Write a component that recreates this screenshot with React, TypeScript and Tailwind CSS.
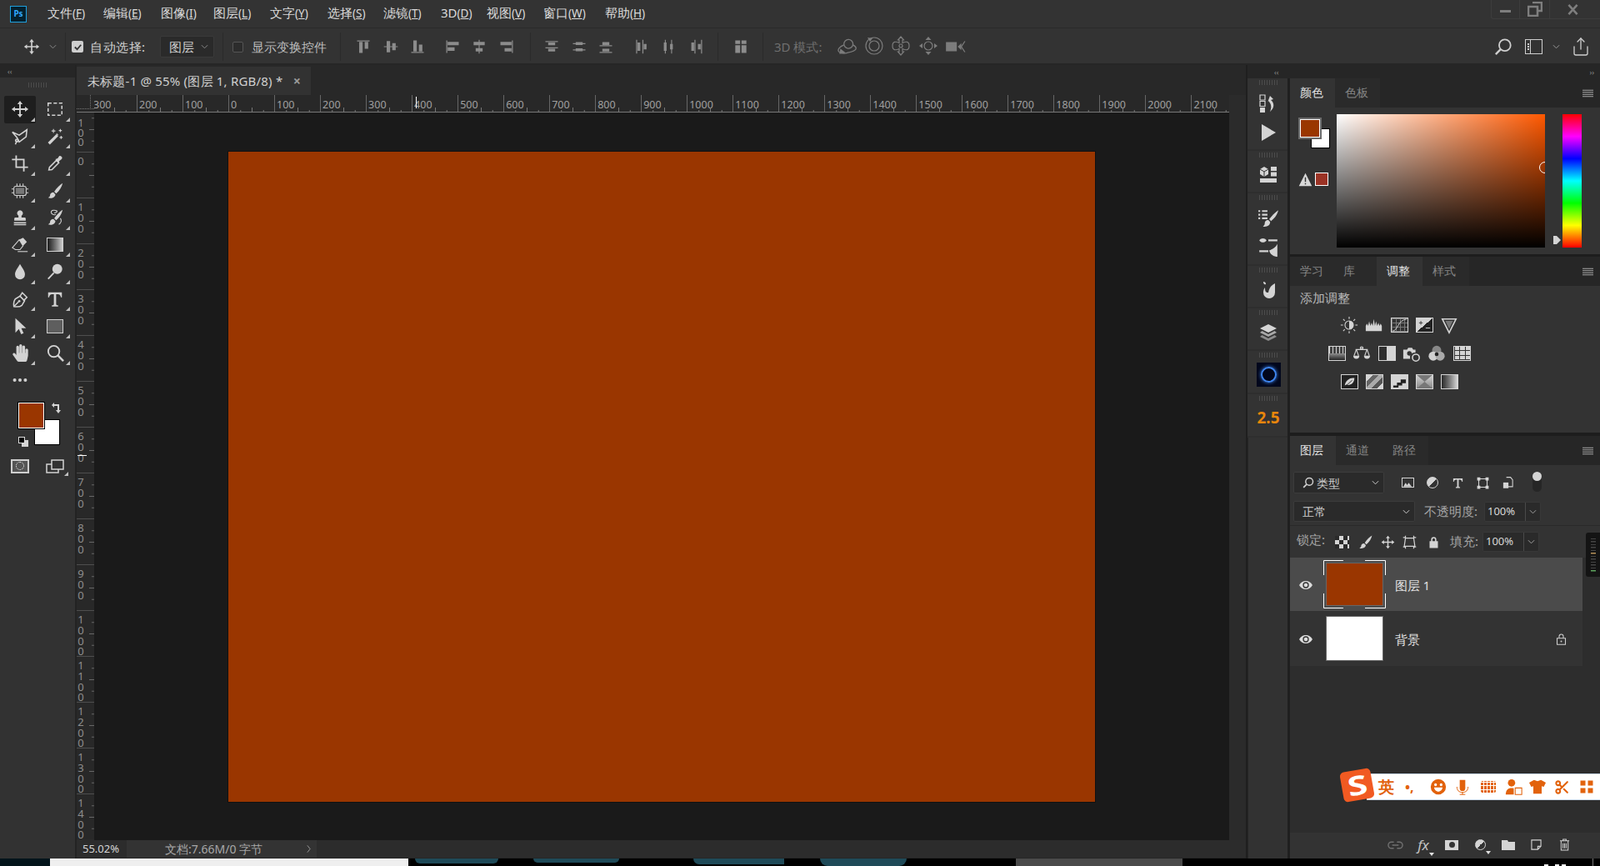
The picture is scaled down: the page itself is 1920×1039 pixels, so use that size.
import * as React from 'react';
import { FaHandPaper } from 'react-icons/fa';
import { Scissors, Share } from 'lucide-react';

type IconProps = { className?: string; children?: React.ReactNode; box?: string };

// all the little photoshop glyphs sit in a 24 box and inherit currentColor
const Ic: React.FC<IconProps> = ({ className = 'w-[22px] h-[22px]', children, box = '0 0 24 24' }) => (
  <svg viewBox={box} className={className} fill="currentColor" stroke="none">
    {children}
  </svg>
);

const line = { fill: 'none', stroke: 'currentColor', strokeWidth: 1.7 };
const thin = { fill: 'none', stroke: 'currentColor', strokeWidth: 1.2 };

const MOVE = 'M12 1l3.4 4.4H13V11h5.6V8.6L23 12l-4.4 3.4V13H13v5.6h2.4L12 23l-3.4-4.4H11V13H5.4v2.4L1 12l4.4-3.4V11H11V5.4H8.6z';
const BRUSH = 'M22 2c-3.5 2-8 6.500-11 11l2.500 2.500C18 12 21 6.500 22 2zM10 14c-3 0-4.500 2-4.500 4 0 1.200-1 2-2.500 3 5 1.500 9.500-1 9.500-4.500z';
const DROP = 'M12 2c3 5.500 6.500 9 6.500 13.500a6.500 6.500 0 0 1-13 0C5.500 11 9 7.500 12 2z';

const tools: React.ReactNode[] = [
  <Ic><path d={MOVE} /></Ic>,
  <Ic><rect x="3" y="4" width="18" height="16" strokeDasharray="4.500 2.600" {...line} /></Ic>,
  <Ic>
    <path d="M2 6l9 4 10-7-1 9-9 7-3-6z" {...line} />
    <path d="M8 17l-2 5" {...line} />
    <circle cx="8" cy="17" r="1.800" {...line} />
  </Ic>,
  <Ic>
    <path d="M4 21L15 10" stroke="currentColor" strokeWidth="3.600" fill="none" />
    <path d="M10 2v5M7.500 4.500h5M19 2v4M17 4h4M20 11v4M18 13h4M14 8l2 2" {...thin} />
  </Ic>,
  <Ic><path d="M7 1.500V17h15.500M1.500 7H17v15.500" {...line} strokeWidth="2" /></Ic>,
  <Ic>
    <path d="M4 20.500l.8-3.500 9-9 3.200 3.200-9 9z" {...line} />
    <path d="M12.500 6.500l3-1 2-3c1.500-1 3.500.5 3.800 1.800s-.6 2.400-1.800 3l-2 1.700-1 3z" />
  </Ic>,
  <Ic>
    <rect x="4" y="6" width="16" height="12" rx="2.500" {...thin} />
    <rect x="6.500" y="8" width="11" height="8" fill="#777" />
    <path d="M8 2.500v3M12 2.500v3M16 2.500v3M8 18.500v3M12 18.500v3M16 18.500v3M1 9.500h3M1 14.500h3M20 9.500h3M20 14.500h3" {...thin} />
  </Ic>,
  <Ic><path d={BRUSH} /></Ic>,
  <Ic>
    <path d="M12 2.500a3.800 3.800 0 0 0-2 7V12H6a1.500 1.500 0 0 0-1.500 1.500V16h15v-2.500A1.500 1.500 0 0 0 18 12h-4V9.500a3.800 3.800 0 0 0-2-7z" />
    <path d="M4 18h16v1.500H4zM4 20.500h16V22H4z" />
  </Ic>,
  <Ic>
    <path d={BRUSH} />
    <path d="M13 8c-2 1-6 0-6-3s5-3 7-2-1 3-3 3M19 13c2 3 1 6-2 8" {...thin} />
  </Ic>,
  <Ic>
    <path d="M11 5l5-2.500 5 5.500-5 5z" />
    <path d="M11 5l5 8-4 5H6l-4-2.500z" {...thin} />
    <path d="M9 20.500h13" {...thin} />
  </Ic>,
  <div className="w-[20px] h-[17px] border border-[#d0d0d0] bg-gradient-to-r from-[#1d1d1d] to-[#cfcfcf]" />,
  <Ic><path d={DROP} /></Ic>,
  <Ic>
    <circle cx="15" cy="8.500" r="6.500" />
    <path d="M10.500 13.500L3 21.500" stroke="currentColor" strokeWidth="2" />
  </Ic>,
  <Ic>
    <path d="M4 21.500c-.6-4 .4-8 2-10l6-3.500 6 6-3.500 6c-2 1.600-6.500 2.100-10.500 1.500z" {...line} />
    <path d="M12 8l3-4.500 6 6L16.500 14M4.500 21L10 15.500" {...line} />
    <circle cx="11" cy="14.500" r="1.500" />
  </Ic>,
  <Ic>
    <path d="M3 3h18v6.500h-1.300c-.4-2.300-1.400-4-4.200-4H13.500V18.500c0 1 .9 1.400 2.600 1.500v1.500H7.900V20c1.700-.1 2.600-.5 2.600-1.500V5.500H8.500c-2.800 0-3.800 1.700-4.200 4H3z" />
  </Ic>,
  <Ic><path d="M6 2v19l4.500-4.800 3 6.800 3.200-1.400-3-6.600H20z" /></Ic>,
  <div className="w-[20px] h-[17px] border border-[#d0d0d0] bg-[#5e5e5e]" />,
  <FaHandPaper className="w-[19px] h-[21px]" />,
  <Ic className="w-[23px] h-[23px]">
    <circle cx="10" cy="10" r="7" {...line} strokeWidth="2" />
    <path d="M15 15l7 7" stroke="currentColor" strokeWidth="2.600" />
  </Ic>,
  <Ic>
    <circle cx="5" cy="12" r="2.200" />
    <circle cx="12" cy="12" r="2.200" />
    <circle cx="19" cy="12" r="2.200" />
  </Ic>,
];

const menus = [
  ['文件', 'F', 'w-[67px]'],
  ['编辑', 'E', 'w-[69px]'],
  ['图像', 'I', 'w-[63px]'],
  ['图层', 'L', 'w-[68px]'],
  ['文字', 'Y', 'w-[69px]'],
  ['选择', 'S', 'w-[67px]'],
  ['滤镜', 'T', 'w-[69px]'],
  ['3D', 'D', 'w-[55px]'],
  ['视图', 'V', 'w-[68px]'],
  ['窗口', 'W', 'w-[74px]'],
  ['帮助', 'H', 'w-[60px]'],
];

const Sep = ({ className = '' }: { className?: string }) => <div className={`w-px h-[34px] bg-[#2a2a2a] ${className}`} />;

const Chevron = ({ className = 'text-[#a0a0a0]' }: { className?: string }) => (
  <svg viewBox="0 0 10 6" className={`w-[9px] h-[6px] ${className}`}>
    <path d="M1 1l4 4 4-4" fill="none" stroke="currentColor" strokeWidth="1.100" />
  </svg>
);

const Align = ({ children }: { children: React.ReactNode }) => (
  <div className="w-[32.500px] flex justify-center">
    <Ic className="w-[20px] h-[20px]">{children}</Ic>
  </div>
);

const aligns = [
  ['M3 3h18v1.500H3zM6 5h5v16H6zM14 5h5v10h-5z'],
  ['M2 11.300h20v1.400H2zM6 4h5v16H6zM14 7h5v10h-5z'],
  ['M3 19.500h18V21H3zM6 3h5v16H6zM14 9h5v10h-5z'],
  ['M3 3h1.500v18H3zM5 5h16v5H5zM5 13h10v5H5z'],
  ['M11.300 2h1.400v20h-1.400zM4 5h16v5H4zM7 14h10v5H7z'],
  ['M19.500 3H21v18h-1.500zM3 5h16v5H3zM9 14h10v5H9z'],
];
const aligns2 = [
  ['M3 4h18v1.500H3zM7 6h10v4H7zM3 13h18v1.500H3zM7 15h10v4H7z'],
  ['M3 7h4v1.400H3zM17 7h4v1.400h-4zM7 5.500h10v4H7zM3 16h4v1.400H3zM17 16h4v1.400h-4zM7 14.500h10v4H7z'],
  ['M3 10h18v1.500H3zM7 5.500h10v4H7zM3 19.500h18V21H3zM7 15h10v4H7z'],
  ['M4 2h1.500v20H4zM6 6h4v12H6zM13 2h1.500v20H13zM15 8h4v8h-4z'],
  ['M7 2h1.400v20H7zM5.500 6h4v12h-4zM16 2h1.400v20H16zM14.500 8h4v8h-4z'],
  ['M10 2h1.500v20H10zM5.500 6h4v12h-4zM19.500 2H21v20h-1.500zM15 8h4v8h-4z'],
];

const threeD: React.ReactNode[] = [
  <Ic className="w-[26px] h-[26px]">
    <circle cx="14" cy="9" r="5" {...thin} />
    <path d="M9 10c-5 2-7 5-6 7s5 3 9 2 9-2 10-4-1-4-3-5" {...thin} />
    <path d="M5 14l6 5-7 1z" />
  </Ic>,
  <Ic className="w-[24px] h-[24px]">
    <circle cx="12" cy="12" r="10" {...thin} />
    <circle cx="12" cy="12" r="6" {...thin} />
    <path d="M4 2l6 1-3 4z" />
  </Ic>,
  <Ic className="w-[24px] h-[24px]">
    <path d="M12 1l3.500 4H14v3.500c4-2 8-2 8 3.500s-4 5.500-8 3.500V19h1.500L12 23l-3.500-4H10v-3.500c-4 2-8 2-8-3.500s4-5.500 8-3.500V5H8.500z" {...thin} />
    <circle cx="12" cy="12" r="2" {...thin} />
  </Ic>,
  <Ic className="w-[24px] h-[24px]">
    <path d="M12 1l3.500 4h-7zM12 23l3.500-4h-7zM1 12l4-3v6zM23 12l-4-3v6z" />
    <circle cx="12" cy="12" r="5" {...thin} />
  </Ic>,
  <Ic className="w-[26px] h-[26px]">
    <path d="M2 7h12v10H2zM15 12l4-4v8z" />
    <path d="M23 6l-4 6 4 6" {...thin} />
  </Ic>,
];

const RulerCell = ({ label }: { label: number }) => (
  <div className="relative w-[55.02px] h-full shrink-0 border-l border-[#666] pl-[2px] pt-[5px] text-[12.5px] leading-[14px] text-[#a0a0a0]">
    {label}
    <svg className="absolute bottom-0 left-0" width="55" height="6">
      <path d="M13.750 6V4M27.500 6V1M41.250 6V4" stroke="#777" fill="none" />
    </svg>
  </div>
);

// digits run down the cell, one upright label per tick
const VRulerCell = ({ label, first }: { label: number; first: boolean }) => (
  <div className={`relative h-[55.02px] w-full shrink-0 border-t border-[#4e4e4e] text-[13px] leading-[9px] text-[#8e8e8e] [writing-mode:vertical-lr] [text-orientation:upright] ${first ? 'pt-[10px] tracking-[-6.500px]' : 'pt-[1px] tracking-[-5.200px]'}`}>
    {label}
    <svg className="absolute top-0 right-0" width="6" height="55">
      <path d="M6 13.750H3M6 27.500H0M6 41.250H3" stroke="#666" fill="none" />
    </svg>
  </div>
);

const Hamburger = () => (
  <svg viewBox="0 0 14 10" className="w-[13px] h-[10px] text-[#a8a8a8]">
    <path d="M0 1h14M0 3.700h14M0 6.400h14M0 9h14" stroke="currentColor" strokeWidth="1.200" />
  </svg>
);

const Tabs = ({ items }: { items: [string, string, boolean][] }) => (
  <div className="flex items-stretch h-[35px] bg-[#262626] shrink-0 pr-[9px]">
    {items.map(([label, w, active]) => (
      <div
        key={label}
        className={`${w} flex items-center pl-[12px] pb-[2px] text-[14px] ${active ? 'bg-[#333333] text-[#e2e2e2]' : 'bg-[#2a2a2a] text-[#858585]'}`}
      >
        {label}
      </div>
    ))}
    <div className="flex-1 flex items-center justify-end">
      <Hamburger />
    </div>
  </div>
);

const Handle = () => <div className="h-[6px] w-[22px] mx-auto bg-[repeating-linear-gradient(90deg,#4c4c4c_0_1px,transparent_1px_3px)]" />;

const AdjCell = ({ children }: { children: React.ReactNode }) => <div className="w-[30px] flex justify-center">{children}</div>;

const adjBox = 'w-[21px] h-[18px] border border-[#d4d4d4]';

const adjRow1: React.ReactNode[] = [
  <Ic>
    <circle cx="12" cy="12" r="5.500" {...thin} />
    <path d="M12 6.500a5.500 5.500 0 0 1 0 11z" />
    <path d="M12 1v3M12 20v3M1 12h3M20 12h3M4.200 4.200l2.100 2.100M17.700 17.700l2.100 2.100M4.200 19.800l2.100-2.100M17.700 6.300l2.100-2.100" {...thin} />
  </Ic>,
  <Ic><path d="M1 20v-7l1.500-3 1.500 3 1.500-6 1.500 6 1.500-4 1.500 4 1.500-9 1.500 9 1.500-6 1.500 6 1.500-4 1.500 4 1.500-3 1.500 3V20z" /></Ic>,
  <div className={`${adjBox} border-[#7e7e7e] bg-[repeating-linear-gradient(90deg,#777_0_1px,transparent_1px_5px),repeating-linear-gradient(0deg,#777_0_1px,transparent_1px_5px)] relative`}>
    <svg viewBox="0 0 21 18" className="absolute inset-0 w-full h-full"><path d="M1 17C8 17 8 2 20 1" stroke="#ddd" fill="none" /></svg>
  </div>,
  <div className={`${adjBox} bg-[linear-gradient(to_bottom_right,#d4d4d4_50%,#222_50%)] relative`}>
    <svg viewBox="0 0 21 18" className="absolute inset-0 w-full h-full"><path d="M3 6h5M5.500 3.500v5M12 13h6" stroke="#333" /><path d="M12 13h6" stroke="#ddd" /></svg>
  </div>,
  <Ic>
    <path d="M3 4h18L12 22z" {...line} />
    <path d="M7 6.500h10L12 17z" fill="#777" />
  </Ic>,
];

const adjRow2: React.ReactNode[] = [
  <div className={`${adjBox} bg-[linear-gradient(to_bottom,transparent_45%,#999_45%,#222)] relative`}>
    <div className="h-[8px] bg-[repeating-linear-gradient(90deg,#d4d4d4_0_1px,#444_1px_4px)]" />
  </div>,
  <Ic>
    <path d="M12 4v2M4 7h16M5 7l-3 8M5 7l3 8M19 7l-3 8M19 7l3 8" {...thin} />
    <path d="M1 15h8a4 4 0 0 1-8 0zM15 15h8a4 4 0 0 1-8 0z" />
    <circle cx="12" cy="5" r="1.800" {...thin} />
  </Ic>,
  <div className={`${adjBox} flex`}>
    <div className="w-1/2 bg-[#2e2e2e]" />
    <div className="w-1/2 bg-[#d4d4d4]" />
  </div>,
  <Ic>
    <path d="M1 7h5l1.500-2.500h5L14 7h3v4a6 6 0 0 0-7 8H1z" />
    <circle cx="9" cy="12" r="3" fill="#333" />
    <circle cx="17.500" cy="17.500" r="4.500" {...line} />
  </Ic>,
  <Ic>
    <circle cx="12" cy="8" r="6" fill="#888" />
    <circle cx="7.500" cy="15.500" r="6" fill="#d0d0d0" />
    <circle cx="16.500" cy="15.500" r="6" fill="#aaa" />
    <circle cx="12" cy="13" r="2.500" fill="#222" />
  </Ic>,
  <div className={`${adjBox} bg-[repeating-linear-gradient(90deg,#333_0_1px,transparent_1px_6.300px),repeating-linear-gradient(0deg,#333_0_1px,transparent_1px_5.300px),linear-gradient(#d4d4d4,#d4d4d4)]`} />,
];

const adjRow3: React.ReactNode[] = [
  <div className={`${adjBox} bg-[#222] flex items-center justify-center`}>
    <svg viewBox="0 0 21 18" className="w-full h-full"><path d="M4 14C5 7 11 3 17 4c0 7-6 11-11 9z" fill="#d4d4d4" /><path d="M4 16L14 7" stroke="#222" /></svg>
  </div>,
  <div className={`${adjBox} bg-[linear-gradient(135deg,#d4d4d4_20%,#666_20%_40%,#aaa_40%_60%,#555_60%_80%,#d4d4d4_80%)]`} />,
  <div className={`${adjBox} bg-[#d4d4d4]`}>
    <svg viewBox="0 0 21 18" className="w-full h-full"><path d="M2 14h5v-4h5V6h7v5h-5v3H9v3H2z" fill="#222" /></svg>
  </div>,
  <div className={`${adjBox} bg-[linear-gradient(to_bottom,#d4d4d4,#888)] relative`}>
    <svg viewBox="0 0 21 18" className="w-full h-full"><path d="M0 0l10.500 9L21 0zM0 18l10.500-9L21 18z" fill="#777" /></svg>
  </div>,
  <div className={`${adjBox} bg-gradient-to-r from-[#2a2a2a] to-[#d8d8d8]`} />,
];

const Eye = () => (
  <Ic className="w-[16px] h-[16px] text-[#dcdcdc]">
    <path d="M0 12c3-5 7-7.500 12-7.500S21 7 24 12c-3 5-7 7.500-12 7.500S3 17 0 12z" />
    <circle cx="12" cy="12" r="5.500" fill="#333" />
    <circle cx="12" cy="12" r="3.500" />
  </Ic>
);

const ValueBox = () => (
  <div className="flex items-center h-[24px] w-[68px] rounded-[2px] bg-[#2a2a2a] border border-[#383838] text-[13px] text-[#d8d8d8]">
    <div className="w-[48px] pl-[3px]">100%</div>
    <div className="flex-1 h-full border-l border-[#4a4a4a] flex items-center justify-center">
      <Chevron />
    </div>
  </div>
);

const Caret = () => (
  <svg className="absolute bottom-[-5px] right-[4px]" width="6" height="4">
    <path d="M0 0h6L3 4z" fill="#e0e0e0" />
  </svg>
);

const orange = 'text-[#e2620c]';

export default function App() {
  return (
    <div className="relative w-[1920px] h-[1039px] overflow-hidden flex flex-col bg-black font-['Liberation_Sans','Noto_Sans_CJK_SC',sans-serif] text-[#d0d0d0]">
      {/* menu bar */}
      <div className="h-[34px] shrink-0 bg-[#333333] border-b border-[#2a2a2a] flex items-center pl-[12px] relative">
        <div className="w-[20px] h-[20px] border-[1.5px] border-[#1f9fdc] bg-[#04202e] flex items-center justify-center text-[10px] font-bold text-[#31a8ff]">
          Ps
        </div>
        <div className="flex ml-[25px] pb-[2px] text-[15px]">
          {menus.map(([name, key, w]) => (
            <div key={key} className={`${w} whitespace-nowrap text-[#dcdcdc]`}>
              {name}
              <span className="text-[13.500px]">
                (<span className="underline">{key}</span>)
              </span>
            </div>
          ))}
        </div>
        <div className="ml-auto flex h-[23px] self-start w-[131px] border-l border-b border-[#3d3d3d] rounded-bl-[3px] text-[#7e7e7e] pr-[5px]">
          <div className="w-[34px] border-r border-[#3d3d3d] flex items-center justify-center">
            <div className="w-[13px] h-[3px] bg-current mt-[4px]" />
          </div>
          <div className="w-[36px] border-r border-[#3d3d3d] flex items-center justify-center">
            <svg viewBox="0 0 18 18" className="w-[18px] h-[18px]"><path d="M6 1h11v10h-4M1 6h11v11H1z" fill="none" stroke="currentColor" strokeWidth="2.600" /></svg>
          </div>
          <div className="flex-1 flex items-center justify-center">
            <svg viewBox="0 0 14 14" className="w-[13px] h-[13px]"><path d="M1.500 1l11 12M12.500 1l-11 12" fill="none" stroke="currentColor" strokeWidth="2.800" /></svg>
          </div>
        </div>
      </div>

      {/* options bar */}
      <div className="h-[44px] shrink-0 bg-[#333333] border-b-2 border-[#262626] pt-[2px] flex items-center text-[15px]">
        <Ic className="w-[20px] h-[20px] ml-[28px] text-[#cfcfcf]"><path d={MOVE} /></Ic>
        <Chevron className="ml-[11px] text-[#8a8a8a]" />
        <Sep className="ml-[10px]" />
        <div className="ml-[7px] w-[14px] h-[14px] rounded-[2px] bg-[#cfcfcf] flex items-center justify-center">
          <svg viewBox="0 0 12 12" className="w-[11px] h-[11px]"><path d="M2 6l3 3 5-6" fill="none" stroke="#333" strokeWidth="2" /></svg>
        </div>
        <span className="ml-[8px] w-[84px] text-[#cfcfcf] whitespace-nowrap tracking-[.5px]">自动选择:</span>
        <div className="w-[65px] h-[26px] rounded-[2px] bg-[#2a2a2a] border border-[#3a3a3a] flex items-center pl-[10px] text-[#cfcfcf]">
          图层
          <Chevron className="ml-auto mr-[6px] text-[#8a8a8a]" />
        </div>
        <Sep className="ml-[10px]" />
        <div className="ml-[11px] w-[13px] h-[13px] rounded-[2px] border border-[#555] bg-[#2c2c2c]" />
        <span className="ml-[10px] w-[106px] text-[#bdbdbd] whitespace-nowrap">显示变换控件</span>
        <Sep />
        <div className="flex text-[#8c8c8c] ml-[11px]">
          {aligns.slice(0, 3).map((a, i) => <Align key={i}><path d={a[0]} /></Align>)}
          <div className="w-[9px]" />
          {aligns.slice(3).map((a, i) => <Align key={i}><path d={a[0]} /></Align>)}
        </div>
        <Sep className="ml-[12px]" />
        <div className="flex text-[#8c8c8c] ml-[9px]">
          {aligns2.slice(0, 3).map((a, i) => <Align key={i}><path d={a[0]} /></Align>)}
          <div className="w-[10px]" />
          {aligns2.slice(3).map((a, i) => <Align key={i}><path d={a[0]} /></Align>)}
        </div>
        <Sep className="ml-[10px]" />
        <div className="w-[53px] flex justify-center text-[#8c8c8c]">
          <Ic className="w-[20px] h-[20px]"><path d="M4 3h7v5H4zM13 3h7v5h-7zM4 10h7v11H4zM13 10h7v11h-7z" /></Ic>
        </div>
        <Sep />
        <span className="ml-[13px] w-[69px] text-[#6f6f6f] whitespace-nowrap">3D 模式:</span>
        <div className="flex text-[#7c7c7c] ml-[2px]">
          {threeD.map((n, i) => (
            <div key={i} className="w-[32.500px] flex justify-center">{n}</div>
          ))}
        </div>
        <div className="ml-auto flex items-center text-[#cfcfcf] pr-[11px]">
          <Ic className="w-[22px] h-[22px]">
            <circle cx="14" cy="10" r="7.500" {...line} strokeWidth="2" />
            <path d="M8.500 15.500L2 22" stroke="currentColor" strokeWidth="2.600" />
          </Ic>
          <div className="ml-[15px] w-[21px] h-[18px] border-[1.5px] border-[#cfcfcf] flex">
            <div className="w-[6px] border-r border-[#cfcfcf] flex flex-col items-center justify-center gap-[1px]">
              <div className="w-[2px] h-[2px] bg-current" />
              <div className="w-[2px] h-[2px] bg-current" />
              <div className="w-[2px] h-[2px] bg-current" />
            </div>
          </div>
          <Chevron className="ml-[12px] text-[#999]" />
          <Share className="ml-[13px] w-[24px] h-[24px]" strokeWidth={1.300} />
        </div>
      </div>

      {/* main */}
      <div className="flex flex-1 min-h-0">
        {/* tools */}
        <div className="w-[92px] shrink-0 border-r-2 border-[#232323] bg-[#323232] flex flex-col">
          <div className="h-[15px] bg-[#262626] pl-[9px] flex items-center text-[9px] leading-none text-[#8c8c8c]">‹‹</div>
          <div className="h-[22px] pt-[6px]">
            <Handle />
          </div>
          <div className="grid grid-cols-[38px_38px] gap-x-[4px] auto-rows-[32.500px] pl-[5px] text-[#d2d2d2]">
            {tools.map((t, i) => (
              <div key={i} className={`relative flex items-center justify-center rounded-[2px] ${i === 0 ? 'bg-[#1e1e1e]' : ''}`}>
                {t}
                <svg className={`absolute bottom-[2px] right-[1px] ${i === 20 ? 'hidden' : ''}`} width="5" height="5">
                  <path d="M5 0v5H0z" fill="#c0c0c0" />
                </svg>
              </div>
            ))}
          </div>
          {/* foreground / background swatches */}
          <div className="relative h-[58px] mt-[10px]">
            <div className="absolute left-[41px] top-[20px] w-[31px] h-[31px] bg-white border border-black" />
            <div className="absolute left-[22px] top-[0px] w-[31px] h-[31px] bg-[#9a3600] border-[1.5px] border-white outline outline-1 outline-black" />
            <svg className="absolute left-[61px] top-[0px] text-[#d4d4d4]" width="14" height="14" viewBox="0 0 14 14">
              <path d="M1 3l3-3v2h6v7h2l-3 4-3-4h2V4H4v2z" fill="currentColor" />
            </svg>
            <div className="absolute left-[26px] top-[45px] w-[8px] h-[8px] bg-[#d4d4d4]" />
            <div className="absolute left-[22px] top-[41px] w-[8px] h-[8px] bg-black border border-[#ddd]" />
          </div>
          <div className="flex mt-[10px] pl-[13px] items-center text-[#d2d2d2]">
            <div className="w-[22px] h-[17px] border-2 border-[#cfcfcf] bg-[#555] flex items-center justify-center">
              <div className="w-[10px] h-[10px] rounded-full border border-dotted border-white" />
            </div>
            <div className="relative ml-[20px]">
              <svg viewBox="0 0 22 17" className="w-[22px] h-[17px]">
                <path d="M1 6h14v10H1z" fill="none" stroke="currentColor" strokeWidth="1.500" />
                <path d="M7 1h14v11H7z" fill="#323232" stroke="currentColor" strokeWidth="1.500" />
              </svg>
              <svg className="absolute bottom-[-3px] right-[-5px]" width="5" height="5">
                <path d="M5 0v5H0z" fill="#c0c0c0" />
              </svg>
            </div>
          </div>
        </div>

        {/* document */}
        <div className="w-[1403px] shrink-0 flex flex-col bg-[#2b2b2b]">
          <div className="h-[36px] shrink-0 flex items-end bg-[#282828]">
            <div className="w-[281px] h-[34px] bg-[#323232] flex items-center pl-[13px] text-[15px] tracking-[.2px] text-[#cfcfcf] whitespace-nowrap">
              未标题-1 @ 55% (图层 1, RGB/8) *
              <span className="ml-auto mr-[12px] text-[16px] font-bold text-[#9a9a9a]">×</span>
            </div>
          </div>
          <div className="h-[21px] shrink-0 flex">
            <div className="w-[21px] shrink-0 relative bg-[#282828] border-b border-[#777]">
              <div className="absolute right-[4px] top-0 bottom-[3px] border-r border-dotted border-[#777]" />
              <div className="absolute left-0 right-0 bottom-[3px] border-t border-dotted border-[#777]" />
            </div>
            <div className="w-[1362px] shrink-0 overflow-hidden bg-[#282828] border-b border-[#777] relative">
              <div className="flex h-full ml-[-4px]">
                {[300, 200, 100, 0, ...Array.from({ length: 21 }, (_, i) => (i + 1) * 100)].map((n, i) => (
                  <RulerCell key={i} label={n} />
                ))}
              </div>
              <div className="absolute left-[386px] top-[2px] h-[14px] w-px bg-white" />
            </div>
          </div>
          <div className="flex flex-1 min-h-0">
            {/* clip box reaches 4px left of the ruler so the tight digit boxes are not clipped */}
            <div className="w-[25px] -ml-[4px] pl-[4px] shrink-0 overflow-hidden relative">
              <div className="flex flex-col mt-[-8px] bg-[#282828]">
                {[100, 0, ...Array.from({ length: 14 }, (_, i) => (i + 1) * 100)].map((n, i) => (
                  <VRulerCell key={i} label={n} first={i === 0} />
                ))}
              </div>
              <div className="absolute left-[5px] right-[9px] top-[411px] h-px bg-white" />
            </div>
            <div className="w-[1362px] shrink-0 bg-[#1a1a1a] pl-[161px] pt-[47px]">
              <div className="w-[1040px] h-[780px] bg-[#9a3600] outline outline-1 outline-[#111]" />
            </div>
          </div>
          <div className="h-[22px] shrink-0 flex items-center bg-[#2c2c2c] text-[13px] border-b border-[#262626]">
            <div className="w-[60px] pl-[7px] text-[#d6d6d6]">55.02%</div>
            <div className="w-[228px] h-full bg-[#333333] flex items-center pl-[46px] text-[14px] text-[#a8a8a8] whitespace-nowrap">
              文档:7.66M/0 字节
              <span className="ml-auto mr-[7px] text-[#a8a8a8]">
                <svg viewBox="0 0 6 12" className="w-[5px] h-[11px]"><path d="M1 1l4 5-4 5" fill="none" stroke="currentColor" /></svg>
              </span>
            </div>
          </div>
        </div>

        {/* right dock */}
        <div className="flex-1 flex flex-col bg-[#1f1f1f] pl-[2px]">
          <div className="h-[16px] shrink-0 bg-[#262626] flex items-center text-[9px] leading-none text-[#8c8c8c]">
            <span className="ml-[32px]">‹‹</span>
            <span className="ml-auto mr-[8px]">››</span>
          </div>
          <div className="flex flex-1 min-h-0">
            {/* icon strip */}
            <div className="w-[48px] shrink-0 flex flex-col gap-[2px] bg-[#2e2e2e] text-[#d4d4d4]">
              <div className="h-[85px] bg-[#333333] pt-[2px] pl-[2px] flex flex-col items-center">
                <Handle />
                <Ic className="w-[24px] h-[24px] mt-[10px]">
                  <path d="M2 2h6v6H2zM2 9.500h6v6H2z" {...thin} />
                  <path d="M2 17h6v6H2z" />
                  <path d="M14 3l4 4-3 1c4 3 5 9-1 14 2-5 2-9-2-13l-1 2z" />
                </Ic>
                <Ic className="w-[24px] h-[24px] mt-[11px]"><path d="M4 2l17 10L4 22z" /></Ic>
              </div>
              <div className="h-[49px] bg-[#333333] pt-[2px] pl-[2px] flex flex-col items-center">
                <Handle />
                <Ic className="w-[24px] h-[24px] mt-[9px]">
                  <path d="M2 5l5-3 5 3v6l-5 3-5-3z" />
                  <path d="M2 5l5 3 5-3M7 8v6" stroke="#333" fill="none" />
                  <path d="M15 2h7v5h-7zM15 8.500h7v5h-7zM2 16h20v5H2z" />
                </Ic>
              </div>
              <div className="h-[85px] bg-[#333333] pt-[2px] pl-[2px] flex flex-col items-center">
                <Handle />
                <Ic className="w-[26px] h-[26px] mt-[10px]">
                  <path d="M1 2h2v2H1zM5 2h6v2H5zM1 6h2v2H1zM5 6h6v2H5zM1 10h2v2H1zM5 10h6v2H5z" />
                  <path d="M23 2c-3 2-7 6-10 10l2 2c4-3 7-7 8-12zM12 13c-3 0-4 2-4 4 0 1-1 2-2 3 4 1 8-1 8-5z" />
                </Ic>
                <Ic className="w-[26px] h-[26px] mt-[7px]">
                  <path d="M2 5c2-3 6-3 8 0 2 0 2 0 0 0-2 3-6 3-8 0zM12 4h10v2H12zM2 16h10v2H2zM22 9v14c-5 0-9-4-9-7 3-1 7-3 9-7z" />
                </Ic>
              </div>
              <div className="h-[49px] bg-[#333333] pt-[2px] pl-[2px] flex flex-col items-center">
                <Handle />
                <Ic className="w-[24px] h-[24px] mt-[9px]">
                  <path d="M6 2c2 0 3 1 3 3-2 1-3-1-3-3z" />
                  <path d="M20 4v11a7 7 0 0 1-14 0c0-3 1-5 2-6 0 5 1 6 4 6 1-6 4-9 8-11z" />
                </Ic>
              </div>
              <div className="h-[49px] bg-[#333333] pt-[2px] pl-[2px] flex flex-col items-center">
                <Handle />
                <Ic className="w-[24px] h-[24px] mt-[9px]">
                  <path d="M12 2l10 5-10 5L2 7z" />
                  <path d="M4.500 10L12 14l7.500-4L22 12l-10 5-10-5z" fill="#a8a8a8" />
                  <path d="M4.500 15L12 19l7.500-4L22 17l-10 5-10-5z" fill="#8c8c8c" />
                </Ic>
              </div>
              <div className="h-[50px] bg-[#333333] pt-[2px] pl-[2px] flex flex-col items-center">
                <Handle />
                <div className="w-[29px] h-[29px] mt-[6px] bg-[#02071c] flex items-center justify-center">
                  <div className="w-[19px] h-[19px] rounded-full border-2 border-[#3f86f0] shadow-[0_0_4px_#3f86f0]" />
                </div>
              </div>
              <div className="h-[50px] bg-[#333333] pt-[2px] pl-[2px] flex flex-col items-center">
                <Handle />
                <div className="mt-[8px] text-[19px] leading-[24px] font-bold text-[#e8860c]">2.5</div>
              </div>
              <div className="flex-1 bg-[#323232] border-l border-[#262626]" />
            </div>

            {/* panels */}
            <div className="w-[373px] shrink-0 ml-[3px] flex flex-col bg-[#1d1d1d] min-w-0">
              <div className="shrink-0">
                <Tabs items={[['颜色', 'w-[54px]', true], ['色板', 'w-[54px]', false]]} />
                <div className="h-[176px] bg-[#333333] flex pt-[8px]">
                  <div className="w-[56px] shrink-0 relative">
                    <div className="absolute left-[25px] top-[17px] w-[23px] h-[24px] bg-white border border-black" />
                    <div className="absolute left-[10px] top-[4px] w-[28px] h-[26px] border-2 border-[#6a6a6a] bg-white p-[1px]">
                      <div className="w-full h-full bg-[#9a3600]" />
                    </div>
                    <Ic className="absolute left-[10px] top-[70px] w-[17px] h-[17px] text-[#d8d8d8]">
                      <path d="M12 1l11 22H1zM11 8v8h2V8zM11 18v2h2v-2z" fillRule="evenodd" />
                    </Ic>
                    <div className="absolute left-[30px] top-[70px] w-[16px] h-[16px] border border-white bg-[#9b3325]" />
                  </div>
                  <div className="relative w-[250px] h-[160px] shrink-0 overflow-hidden bg-[linear-gradient(to_top,#000,transparent),linear-gradient(to_right,#fff,#ff5800)]">
                    <div className="absolute left-[243px] top-[57px] w-[14px] h-[14px] rounded-full border border-white" />
                  </div>
                  <div className="relative w-[21px] shrink-0">
                    <svg className="absolute left-[10px] top-[145px]" width="9" height="12"><path d="M0 1h4l5 5-5 5H0z" fill="#d4d4d4" /></svg>
                  </div>
                  <div className="w-[23px] h-[160px] shrink-0 bg-[linear-gradient(to_bottom,#f00,#f0f,#00f,#0ff,#0f0,#ff0,#f00)]" />
                </div>
              </div>

              <div className="shrink-0 mt-[3px]">
                <Tabs items={[['学习', 'w-[52px]', false], ['库', 'w-[52px]', false], ['调整', 'w-[55px]', true], ['样式', 'w-[56px]', false]]} />
                <div className="h-[176px] bg-[#333333] pl-[12px] pt-[4px]">
                  <div className="text-[14.500px] leading-[20px] text-[#b8b8b8]">添加调整</div>
                  <div className="flex flex-col text-[#d4d4d4] mt-[12px] gap-[12px]">
                    <div className="flex ml-[44px] h-[22px] items-center">
                      {adjRow1.map((n, i) => <AdjCell key={i}>{n}</AdjCell>)}
                    </div>
                    <div className="flex ml-[29px] h-[22px] items-center">
                      {adjRow2.map((n, i) => <AdjCell key={i}>{n}</AdjCell>)}
                    </div>
                    <div className="flex ml-[44px] h-[22px] items-center">
                      {adjRow3.map((n, i) => <AdjCell key={i}>{n}</AdjCell>)}
                    </div>
                  </div>
                </div>
              </div>

              <div className="flex-1 min-h-0 mt-[4px] flex flex-col relative">
                <Tabs items={[['图层', 'w-[55px]', true], ['通道', 'w-[56px]', false], ['路径', 'w-[55px]', false]]} />
                <div className="bg-[#333333] h-[73px] shrink-0 pl-[4px] flex flex-col text-[#cfcfcf]">
                  <div className="flex items-center h-[26px] mt-[8px]">
                    <div className="w-[109px] h-full bg-[#2a2a2a] border border-[#3c3c3c] rounded-[2px] flex items-center pl-[10px] text-[14px]">
                      <Ic className="w-[14px] h-[14px]">
                        <circle cx="14" cy="10" r="7.500" {...line} strokeWidth="2.500" />
                        <path d="M8.500 15.500L2 22" stroke="currentColor" strokeWidth="3" />
                      </Ic>
                      <span className="ml-[3px]">类型</span>
                      <Chevron className="ml-auto mr-[5px]" />
                    </div>
                    <div className="flex ml-[13px] items-center text-[#d4d4d4]">
                      <div className="w-[30px] flex justify-center">
                        <div className="w-[15px] h-[12px] border-[1.5px] border-[#d4d4d4] flex items-end justify-center">
                          <svg viewBox="0 0 12 7" className="w-[11px] h-[7px]"><path d="M0 7l3-5 2 3 2-3 4 5z" fill="currentColor" /></svg>
                        </div>
                      </div>
                      <div className="w-[30px] flex justify-center">
                        <div className="w-[14px] h-[14px] rounded-full bg-[linear-gradient(135deg,#d4d4d4_50%,#333_50%)] border border-[#d4d4d4]" />
                      </div>
                      <div className="w-[30px] flex justify-center">
                        <Ic className="w-[15px] h-[15px]"><path d="M3 3h18v6.500h-1.300c-.4-2.300-1.400-4-4.200-4H13.500V18.500c0 1 .9 1.400 2.600 1.500v1.500H7.900V20c1.700-.1 2.600-.5 2.600-1.500V5.500H8.500c-2.800 0-3.800 1.700-4.200 4H3z" /></Ic>
                      </div>
                      <div className="w-[30px] flex justify-center">
                        <Ic className="w-[15px] h-[15px]">
                          <path d="M4 4h16v16H4z" {...line} />
                          <path d="M1 1h6v6H1zM17 1h6v6h-6zM1 17h6v6H1zM17 17h6v6h-6z" />
                        </Ic>
                      </div>
                      <div className="w-[30px] flex justify-center">
                        <Ic className="w-[15px] h-[15px]">
                          <path d="M9 1h8l4 5v13h-9" {...line} />
                          <path d="M3 11h10v11H3z" />
                        </Ic>
                      </div>
                      <div className="ml-[15px] w-[11px] h-[22px] rounded-full bg-[#262626] relative">
                        <div className="w-[11px] h-[11px] rounded-full bg-[#d4d4d4] mt-[-2px]" />
                      </div>
                    </div>
                  </div>
                  <div className="flex items-center h-[25px] mt-[9px]">
                    <div className="w-[146px] h-full bg-[#2a2a2a] border border-[#3c3c3c] rounded-[2px] flex items-center pl-[10px] text-[14px]">
                      正常
                      <Chevron className="ml-auto mr-[5px]" />
                    </div>
                    <span className="ml-[11px] w-[72px] text-[15px] text-[#a6a6a6] whitespace-nowrap">不透明度:</span>
                    <ValueBox />
                  </div>
                  <div className="h-px bg-[#2a2a2a] mt-[4px] -ml-[4px]" />
                </div>
                <div className="bg-[#333333] h-[38px] shrink-0 flex items-center pl-[8px] text-[#d4d4d4]">
                  <span className="w-[46px] pb-[5px] text-[15px] text-[#a6a6a6] whitespace-nowrap">锁定:</span>
                  <div className="w-[17px] h-[15px] bg-[repeating-conic-gradient(#d4d4d4_0_25%,#2a2a2a_0_50%)] bg-[length:10px_10px]" />
                  <Ic className="w-[19px] h-[19px] ml-[10px]"><path d={BRUSH} /></Ic>
                  <Ic className="w-[17px] h-[17px] ml-[9px]"><path d={MOVE} /></Ic>
                  <Ic className="w-[17px] h-[17px] ml-[9px]">
                    <path d="M5 5h14l2 14H3zM1 4h4M19 4h4M5 1v4M19 1v4M1 20h4M19 20h4M5 19v4M19 19v4" {...line} />
                  </Ic>
                  <Ic className="w-[15px] h-[15px] ml-[13px]">
                    <path d="M7 10V7a5 5 0 0 1 10 0v3h3v13H4V10zm2.500 0h5V7a2.500 2.500 0 0 0-5 0z" fillRule="evenodd" />
                  </Ic>
                  <span className="ml-[12px] w-[39px] pb-[2px] text-[15px] text-[#a6a6a6] whitespace-nowrap">填充:</span>
                  <ValueBox />
                </div>
                {/* layer rows */}
                <div className="flex flex-1 min-h-0 bg-[#2d2d2d]">
                  <div className="w-[351px] shrink-0">
                    <div className="h-[64px] bg-[#4b4b4b] flex items-center text-[#e2e2e2]">
                      <div className="w-[40px] flex justify-center pr-[2px] pt-[2px]"><Eye /></div>
                      <div className="relative w-[75px] h-[58px] flex items-center justify-center">
                        <div className="w-[69px] h-[52px] bg-[#9a3600] border border-[#666]" />
                        <svg className="absolute inset-0" width="75" height="58">
                          <path d="M.5 18V.5H24M50 .5H74.500V18M74.500 40V57.500H50M24 57.500H.5V40" stroke="#fff" fill="none" />
                        </svg>
                      </div>
                      <span className="ml-[11px] pt-[4px] text-[14.500px]">图层 1</span>
                    </div>
                    <div className="h-[66px] bg-[#333333] flex items-center text-[#e2e2e2]">
                      <div className="w-[40px] flex justify-center pr-[2px] pt-[2px]"><Eye /></div>
                      <div className="w-[75px] flex justify-center">
                        <div className="w-[69px] h-[54px] bg-white border border-[#666]" />
                      </div>
                      <span className="ml-[11px] pt-[3px] text-[14.500px]">背景</span>
                      <Ic className="ml-auto mr-[18px] mt-[2px] w-[15px] h-[16px] text-[#cfcfcf]">
                        <path d="M8 10V6.500a4 4 0 0 1 8 0V10" {...line} />
                        <path d="M4 10h16v12H4z" {...line} />
                        <circle cx="12" cy="16" r="1.600" />
                      </Ic>
                    </div>
                  </div>
                </div>
                <div className="h-[31px] shrink-0 bg-[#333333] flex items-center text-[#d4d4d4] pl-[110px] pb-[2px]">
                  <div className="w-[33px] flex justify-center text-[#707070]">
                    <svg viewBox="0 0 20 10" className="w-[19px] h-[10px]"><path d="M8 1H5a4 4 0 0 0 0 8h3M12 1h3a4 4 0 0 1 0 8h-3M6 5h8" fill="none" stroke="currentColor" strokeWidth="1.500" /></svg>
                  </div>
                  <div className="relative w-[34px] flex justify-center italic font-['Liberation_Serif',serif] text-[17px] leading-none text-[#c4c4c4]">
                    fx
                    <Caret />
                  </div>
                  <div className="w-[34px] flex justify-center">
                    <div className="w-[16px] h-[12px] bg-[#d4d4d4] flex items-center justify-center">
                      <div className="w-[7px] h-[7px] rounded-full bg-[#333]" />
                    </div>
                  </div>
                  <div className="relative w-[34px] flex justify-center">
                    <div className="w-[13px] h-[13px] rounded-full bg-[linear-gradient(135deg,#d4d4d4_50%,#333_50%)] border border-[#d4d4d4]" />
                    <Caret />
                  </div>
                  <div className="w-[33px] flex justify-center">
                    <svg viewBox="0 0 16 12" className="w-[16px] h-[12px]"><path d="M0 0h7l1 2h8v10H0z" fill="currentColor" /></svg>
                  </div>
                  <div className="w-[34px] flex justify-center">
                    <svg viewBox="0 0 14 14" className="w-[13px] h-[13px]"><path d="M1 1h12v8l-4 4H1zM9 13V9h4" fill="none" stroke="currentColor" strokeWidth="1.200" /></svg>
                  </div>
                  <div className="w-[34px] flex justify-center">
                    <svg viewBox="0 0 14 16" className="w-[13px] h-[15px]"><path d="M1 3h12M5 3V1h4v2M2.500 3v12h9V3M5 6v6.500M7 6v6.500M9 6v6.500" fill="none" stroke="currentColor" strokeWidth="1.100" /></svg>
                  </div>
                </div>
                {/* meter stuck to the panel edge */}
                <div className="absolute right-0 top-[116px] w-[18px] h-[53px] bg-[#141414] rounded-l-[3px] flex flex-col justify-center items-center gap-[2px]">
                  {['#444', '#444', '#444', '#444', '#444', '#b8935a', '#444', '#444', '#444', '#444', '#444', '#5da35d'].map((c, i) => (
                    <svg key={i} width="6" height="1.500"><rect width="6" height="1.500" fill={c} /></svg>
                  ))}
                </div>
              </div>
            </div>
          </div>
        </div>
      </div>

      {/* taskbar peeking out under the window */}
      <div className="h-[9px] shrink-0 flex bg-black">
        <div className="w-[60px] bg-[#03141b]" />
        <div className="w-[430px] bg-[#efefef]" />
        <div className="w-[8px]" />
        <div className="w-[100px] h-[6px] rounded-b-[40px] bg-[#1f4a58]" />
        <div className="w-[42px]" />
        <div className="w-[103px] h-[5px] rounded-b-[30px] bg-[#1f4a58]" />
        <div className="w-[89px]" />
        <div className="w-[109px] h-[7px] rounded-bl-[30px] bg-[#1f4a58]" />
        <div className="w-[43px]" />
        <div className="w-[104px] h-[9px] rounded-b-[30px] bg-[#1f4a58]" />
        <div className="w-[131px]" />
        <div className="w-[200px] bg-[#4a4a4a]" />
        <div className="w-[434px]" />
        <div className="w-[5px] h-[2px] self-end bg-white" />
        <div className="w-[8px]" />
        <div className="w-[5px] h-[2px] self-end bg-white" />
        <div className="w-[3px]" />
        <div className="w-[5px] h-[2px] self-end bg-white" />
        <div className="w-[32px]" />
        <div className="w-px bg-[#777]" />
      </div>

      {/* sogou ime bar floats over the layers panel */}
      <div className="absolute left-[1640px] top-[928px] w-[280px] h-[32px] bg-white border-y border-[#c8d8e8] flex items-center">
        <span className={`ml-[14px] w-[24px] text-[19px] font-bold leading-none ${orange}`}>英</span>
        <span className={`ml-[8px] w-[30px] text-[16px] font-bold leading-none ${orange}`}>•,</span>
        <div className={`flex items-center ${orange}`}>
          <Ic className="w-[20px] h-[20px]">
            <path d="M12 1a11 11 0 1 0 0 22 11 11 0 0 0 0-22zM8 7a2 2 0 1 1 0 4 2 2 0 0 1 0-4zm8 0a2 2 0 1 1 0 4 2 2 0 0 1 0-4zM6 13h12c0 3-3 6-6 6s-6-3-6-6z" fillRule="evenodd" />
          </Ic>
          <Ic className="w-[20px] h-[20px] ml-[9px]">
            <path d="M8 2h8v12a4 4 0 0 1-8 0z" />
            <path d="M4 12c0 5 3 8 8 8s8-3 8-8M12 20v3M8 23h8" {...thin} />
          </Ic>
          <div className="w-[18px] h-[14px] ml-[12px] rounded-[2px] bg-[#e2620c] bg-[repeating-linear-gradient(90deg,transparent_0_3px,#fff_3px_4px),repeating-linear-gradient(0deg,transparent_0_3.500px,#fff_3.500px_4.500px)]" />
          <Ic className="w-[21px] h-[21px] ml-[11px]">
            <circle cx="9" cy="6" r="5" />
            <path d="M1 22c0-6 3-9 8-9 1 0 2 0 3 .5V22z" />
            <path d="M14 13h9v9h-9z" {...thin} />
          </Ic>
          <Ic className="w-[20px] h-[20px] ml-[8px]">
            <path d="M7 2l5 2 5-2 7 4-3 6-3-1v11H6V11l-3 1-3-6z" />
          </Ic>
          <Scissors className="w-[19px] h-[19px] ml-[10px]" strokeWidth={2.600} />
          <Ic className="w-[18px] h-[18px] ml-[11px]">
            <path d="M2 2h8v8H2zM14 2h8v8h-8zM2 14h8v8H2zM14 14h8v8h-8z" />
          </Ic>
        </div>
      </div>
      <div className="absolute left-[1610px] top-[924px] w-[37px] h-[36px] rounded-[5px] bg-[#f15a22] rotate-[-10deg] flex items-center justify-center">
        <span className="text-[32px] font-bold leading-none text-white scale-x-[1.350]">S</span>
      </div>
    </div>
  );
}
